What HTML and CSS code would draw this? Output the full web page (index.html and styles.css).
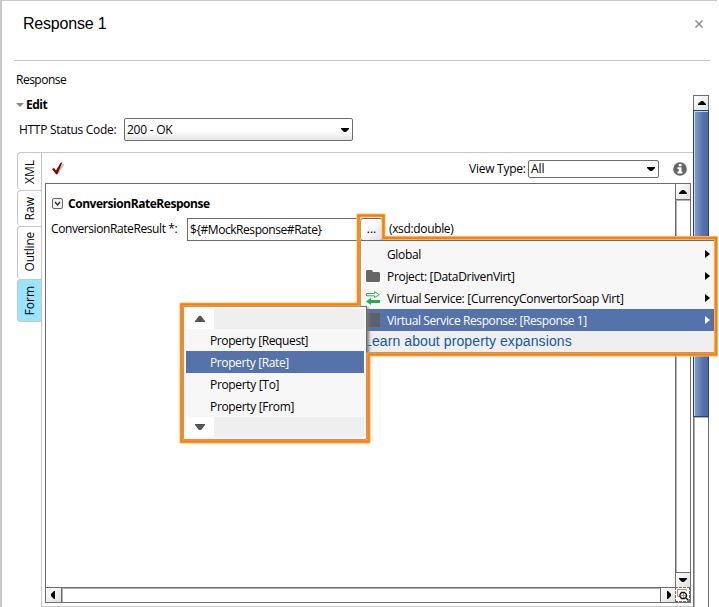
FILE: index.html
```html
<!DOCTYPE html>
<html lang="en">
<head>
<meta charset="utf-8">
<title>Response 1</title>
<link rel="stylesheet" href="styles.css">
</head>
<body>
<main class="window">
  <header class="titlebar">
    <h1>Response 1</h1>
    <svg class="close" width="8" height="8" viewBox="0 0 8 8"><path d="M.5 .5l7 7M7.500 .5l-7 7" stroke="#8c8c8c" stroke-width="1.5"/></svg>
  </header>
  <div class="workspace">
    <section class="editor">
      <div class="section-label"><span class="t-response">Response</span></div>
      <div class="edit-head"><svg width="8" height="4" viewBox="0 0 8 4"><path d="M0 0h8l-4 4z" fill="#888"/></svg><b class="t-edit">Edit</b></div>
      <div class="status"><label class="t-status">HTTP Status Code:</label>
        <div class="combo"><span class="t-ok">200 - OK</span><svg width="8" height="4" viewBox="0 0 8 4"><path d="M0 0h8v1l-3 3h-2l-3-3z"/></svg></div>
      </div>
      <div class="tabbed">
        <nav class="tabs">
          <div class="tab xml"><span>XML</span></div>
          <div class="tab raw"><span>Raw</span></div>
          <div class="tab outline"><span>Outline</span></div>
          <div class="tab form"><span>Form</span></div>
        </nav>
        <div class="panel">
          <div class="toolbar">
            <svg class="check" width="12" height="13" viewBox="0 0 12 13"><path d="M2 8l3 4L11.500 2" fill="none" stroke="#c4c4c4" stroke-width="2"/><path d="M0 7l2-1 2 2.500L8.500 1l2-1-5 12H4z" fill="#850000"/></svg>
            <label class="t-view">View Type:</label>
            <div class="combo small"><span class="t-all">All</span><svg width="8" height="4" viewBox="0 0 8 4"><path d="M0 0h8v1l-3 3h-2l-3-3z"/></svg></div>
            <svg class="info" width="14" height="14" viewBox="0 0 14 14"><circle cx="7" cy="7" r="6.800" fill="#666"/><path d="M5.800 2h2.700v2.200H5.800zM4.500 5.200h4v4.300h1V11.500h-5v-2h1.300V7H4.500z" fill="#fff"/></svg>
          </div>
          <div class="viewer">
            <div class="form-area">
              <div class="group"><svg width="11" height="11" viewBox="0 0 11 11"><rect x=".5" y=".5" width="10" height="10" rx="1.500" fill="#f2f2f2" stroke="#666"/><path d="M3 4l2.500 3L8 4" fill="none" stroke="#222" stroke-width="1.200"/></svg><b class="t-group">ConversionRateResponse</b></div>
              <div class="field"><label class="t-result">ConversionRateResult *:</label><div class="input"><span class="t-value">${#MockResponse#Rate}</span></div><button>...</button><span class="t-xsd">(xsd:double)</span></div>
            </div>
            <div class="vbar"><div class="sb up"><svg width="8" height="4" viewBox="0 0 8 4"><path d="M0 4h8V3L5 0H3L0 3z"/></svg></div><div class="track"></div><div class="sb down"><svg width="8" height="4" viewBox="0 0 8 4"><path d="M0 0h8v1L5 4H3L0 1z"/></svg></div></div>
            <div class="hbar"><div class="sb left"><svg width="4" height="8" viewBox="0 0 4 8"><path d="M4 0v8H3L0 5V3l3-3z"/></svg></div><div class="track"></div><div class="sb right"><svg width="4" height="8" viewBox="0 0 4 8"><path d="M0 0v8h1l3-3V3L1 0z"/></svg></div></div>
            <div class="corner"><svg width="13" height="13" viewBox="0 0 13 13" fill="none"><path d="M1.500 8V1.500h9V3M1.500 8.500H4M5 7.500h5M7.500 5v5" stroke="#c79261"/><path d="M5.500 4.500h3l2 2v2l-2 2h-3l-1.500-2v-2zM9.500 9.500l3 3" stroke="#111" stroke-width="1.300"/></svg></div>
          </div>
        </div>
      </div>
    </section>
    <aside class="outer-bar"><div class="sb up"><svg width="8" height="4" viewBox="0 0 8 4"><path d="M0 4h8V3L5 0H3L0 3z"/></svg></div><div class="thumb"></div><div class="track"></div></aside>
  </div>
</main>

<div class="menu">
  <div class="item"><span class="icon"></span><span class="t-global">Global</span><i class="arrow"></i></div>
  <div class="item"><span class="icon"><svg width="14" height="12" viewBox="0 0 14 12"><path d="M0 1l1-1h5l1 2h6l1 1v8l-1 1H1l-1-1z" fill="#666"/></svg></span><span class="t-project">Project: [DataDrivenVirt]</span><i class="arrow"></i></div>
  <div class="item"><span class="icon"><svg width="14" height="14" viewBox="0 0 14 14"><path d="M.5 2.500h8V.700l4.800 3L8.500 6.500V4.800h-8z" fill="#fff" stroke="#35b454"/><path d="M14 9H5V6.800L0 10.500 5 14v-2h9z" fill="#28ae49"/></svg></span><span class="t-service">Virtual Service: [CurrencyConvertorSoap Virt]</span><i class="arrow"></i></div>
  <div class="item selected"><span class="icon"><svg width="14" height="14" viewBox="0 0 14 14"><rect width="14" height="14" fill="#606060"/><path d="M3 2v2l1 2 1-2V2M10 2v4M4 12V8h2v2l1 2M9 8h4M11 8v4" fill="none" stroke="#526491"/></svg></span><span class="t-vresp">Virtual Service Response: [Response 1]</span><i class="arrow"></i></div>
  <div class="learn"><span class="t-learn">Learn about property expansions</span></div>
</div>
<div class="submenu">
  <div class="scroll"><span><svg width="10" height="6" viewBox="0 0 10 6"><path d="M4 0h2l4 5v1H0V5z" fill="#555"/></svg></span></div>
  <div class="prop"><span class="t-p1">Property [Request]</span></div>
  <div class="prop selected"><span class="t-p2">Property [Rate]</span></div>
  <div class="prop"><span class="t-p3">Property [To]</span></div>
  <div class="prop"><span class="t-p4">Property [From]</span></div>
  <div class="scroll"><span><svg width="10" height="6" viewBox="0 0 10 6"><path d="M4 6h2l4-5V0H0v1z" fill="#555"/></svg></span></div>
</div>
<svg class="callout" width="719" height="607" viewBox="0 0 719 607" fill="none"><path d="M358.500 304.500V215.500H383.500V238H716V354.500H368.500V441.500H181.500V304.500Z" stroke="#ffc58b" stroke-width="4"/><path d="M358.500 304.500V215.500H383.500V238H716V354.500H368.500V441.500H181.500V304.500Z" stroke="#ff8000" stroke-width="2.600"/></svg>
</body>
</html>
```
FILE: styles.css
```css
* { box-sizing: border-box; }
body { margin: 0; width: 719px; height: 607px; overflow: hidden; background: #fff; color: #000; font: 12px/16px "Open Sans", "Noto Sans", sans-serif; }
svg { display: block; flex: none; }
span, label, b { white-space: nowrap; }
.window { display: flex; flex-direction: column; width: 717px; height: 607px; border-top: 1px solid #c8c8c8; border-left: 2px solid #c8c8c8; }
.titlebar { display: flex; height: 60px; margin: 0 7px 0 12px; padding: 12px 7px 0 9px; justify-content: space-between; border-bottom: 1px solid #c8c8c8; }
h1 { margin: 0; font: 16px/22px "Liberation Sans", Arial, sans-serif; letter-spacing: -.2px; }
.close { margin-top: 7px; }
.workspace { display: flex; flex: 1; min-height: 0; }
.editor { width: 691px; padding-left: 14px; display: flex; flex-direction: column; }
.section-label { height: 34px; padding-top: 11px; }
.edit-head { height: 20px; display: flex; align-items: center; gap: 2px; }
.status { height: 37px; padding: 3px 0 0 3px; display: flex; align-items: flex-start; }
.status label { width: 105px; padding-top: 4px; }
.combo { width: 229px; height: 23px; border: 1px solid #6d6d6d; border-radius: 2px; background: linear-gradient(#fff 55%, #e5e5e5); display: flex; align-items: center; justify-content: space-between; padding: 0 3px 0 2px; }
.combo.small { width: 131px; height: 18px; background: #fff; }
.tabbed { flex: 1; display: flex; min-height: 0; }
.tabs { width: 25px; padding-left: 1px; }
.tab { border: 1px solid #c8c8c8; border-right: 0; border-bottom: 0; border-radius: 4px 0 0 4px; display: flex; align-items: center; justify-content: center; }
.tab span { writing-mode: vertical-rl; transform: rotate(180deg); }
.xml { height: 38px; } .raw { height: 36px; } .outline { height: 53px; padding-bottom: 2px; letter-spacing: -.25px; }
.form { height: 43px; background: #99e5ff; border-bottom: 1px solid #c8c8c8; }
.panel { flex: 1; border: 1px solid #c8c8c8; border-right: 0; padding: 0 2px 3px 3px; display: flex; flex-direction: column; }
.toolbar { height: 30px; display: flex; align-items: center; padding: 2px 4px 0 6px; }
.toolbar label { margin-left: auto; width: 59px; }
.check { margin: -1px 0 0 1px; }
.info { margin-left: 14px; }
.viewer { flex: 1; border: 1px solid #6d6d6d; display: grid; grid-template-columns: 1fr 15px; grid-template-rows: 1fr 15px; min-height: 0; }
.form-area { padding: 11px 0 0 6px; }
.group { display: flex; align-items: center; gap: 5px; height: 17px; }
.field { display: flex; align-items: center; height: 24px; margin: 5px 0 0 -1px; }
.field label { width: 136px; }
.input { width: 173px; height: 23px; border: 1px solid #6d6d6d; padding: 3px 2px; }
button { width: 23px; height: 23px; padding: 0; border: 1px solid #6d6d6d; border-radius: 3px; font: inherit; line-height: 16px; background: linear-gradient(135deg, #fff 40%, #ddd); margin-right: 6px; }
.vbar, .hbar, .outer-bar { display: flex; }
.vbar, .outer-bar { flex-direction: column; border-left: 1px solid #6d6d6d; }
.hbar { border-top: 1px solid #6d6d6d; }
.track { flex: 1; box-shadow: inset 1px 1px #b0b0b0; }
.sb { display: flex; align-items: center; justify-content: center; background: linear-gradient(135deg, #fff, #e0e0e0); flex: none; }
.vbar .sb { height: 15px; } .vbar .up { height: 16px; border-bottom: 1px solid #6d6d6d; } .vbar .down { border-top: 1px solid #6d6d6d; }
.hbar .sb { width: 15px; border: 0 solid #6d6d6d; } .hbar .left { width: 16px; padding-right: 1px; border-right-width: 1px; } .hbar .right { border-left-width: 1px; padding-left: 1px; }
.corner { border: 1px dashed #6d6d6d; display: flex; align-items: center; justify-content: center; }
.outer-bar { width: 16px; margin-top: 34px; border-right: 1px solid #6d6d6d; }
.outer-bar .up { height: 15px; padding-left: 2px; border-top: 1px solid #6d6d6d; }
.thumb { height: 307px; margin: 0 -1px; border: 1px solid #26438a; background: linear-gradient(90deg, #8ca2cc, #5674ad 60%, #4968a2); box-shadow: inset 1px 1px #b8d8ff; }
.menu { position: absolute; left: 360px; top: 240px; width: 355px; height: 113px; border: 1px solid #6d6d6d; background: #f7f7f7; padding-top: 2px; }
.item { height: 22px; display: flex; align-items: center; padding: 0 4px 0 5px; }
.item > span:nth-child(2) { padding-top: 2px; }
.icon { width: 21px; }
.arrow { margin-left: auto; border-left: 5px solid; border-top: 4px solid transparent; border-bottom: 4px solid transparent; }
.selected { color: #fff; background: #5572ab; }
.learn { height: 21px; background: #efefef; padding-left: 3px; font: 14px/20px "Liberation Sans", Arial, sans-serif; color: #1259a7; }
.submenu { position: absolute; left: 183px; top: 306px; width: 184px; height: 134px; border: 1px solid #6d6d6d; padding: 2px; background: #f7f7f7; box-shadow: 2px 2px 3px #777; }
.scroll { height: 20px; background: #efefef; }
.scroll span { width: 28px; height: 20px; background: #fff; display: flex; align-items: center; justify-content: center; }
.prop { height: 22px; padding: 4px 0 0 24px; }
.callout { position: absolute; left: 0; top: 0; }

.t-response { letter-spacing: -.5px; }
.t-edit { letter-spacing: -.5px; }
.t-status { letter-spacing: -.3px; }
.t-ok { letter-spacing: -.25px; }
.t-view { letter-spacing: -.25px; }
.t-group { letter-spacing: -.46px; }
.t-result { letter-spacing: -.41px; }
.t-value { letter-spacing: -.44px; }
.t-xsd { letter-spacing: -.35px; }
.t-global { letter-spacing: -.35px; }
.t-project { letter-spacing: -.32px; }
.t-service { letter-spacing: -.31px; }
.t-vresp { letter-spacing: -.4px; }
.t-learn { letter-spacing: .1px; }
.t-p1, .t-p2 { letter-spacing: -.39px; }
.t-p3, .t-p4 { letter-spacing: -.33px; }
```
